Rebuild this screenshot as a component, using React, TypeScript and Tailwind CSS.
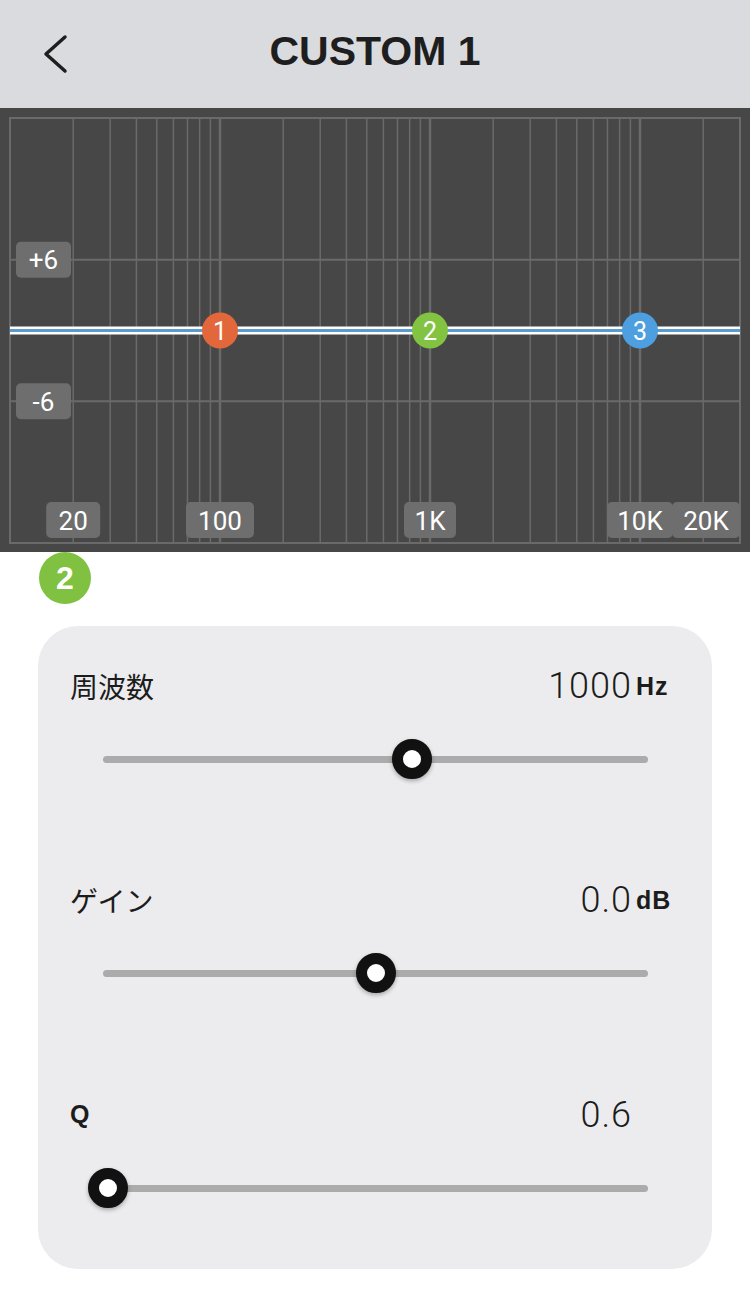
const CHART_W = 750;
const CHART_H = 444;
const LEFT = 10;
const RIGHT = 740;
const TOP = 10;
const BOTTOM = 435;
const PX_PER_DECADE = 210;

// log-frequency axis, 10 Hz at the left edge
const freqX = (f: number) => LEFT + PX_PER_DECADE * Math.log10(f / 10);

// ±18 dB across the plot height
const MID = (TOP + BOTTOM) / 2;
const dbY = (db: number) => MID - (db * (BOTTOM - TOP)) / 36;

const gridFreqs: { f: number; major: boolean }[] = [];
[10, 100, 1000, 10000].forEach((decade) => {
  for (let m = 1; m <= 9; m++) {
    const f = decade * m;
    if (f > 10 && f < 30000) gridFreqs.push({ f, major: m === 1 });
  }
});

const bands = [
  { id: 1, f: 100, color: "#e2673a" },
  { id: 2, f: 1000, color: "#82c341" },
  { id: 3, f: 10000, color: "#4d9fe0" },
];

const freqLabels = [
  { text: "20", x: freqX(20), w: 54 },
  { text: "100", x: freqX(100), w: 68 },
  { text: "1K", x: freqX(1000), w: 52 },
  { text: "10K", x: freqX(10000), w: 66 },
  { text: "20K", x: 706, w: 68 },
];

const LabelBox = ({ text, cx, cy, w }: { text: string; cx: number; cy: number; w: number }) => (
  <g>
    <rect x={cx - w / 2} y={cy - 18} width={w} height={36} rx={5} fill="#6e6e6e" />
    <text
      x={cx}
      y={cy + 9.5}
      textAnchor="middle"
      fill="#ffffff"
      fontSize={26}
      fontFamily="Roboto, 'Liberation Sans', sans-serif"
    >
      {text}
    </text>
  </g>
);

const EqChart = () => (
  <svg width={CHART_W} height={CHART_H} viewBox={`0 0 ${CHART_W} ${CHART_H}`} className="block">
    <rect x={0} y={0} width={CHART_W} height={CHART_H} fill="#474747" />
    <g stroke="#6a6a6a">
      {gridFreqs.map(({ f, major }) => (
        <line key={f} x1={freqX(f)} x2={freqX(f)} y1={TOP} y2={BOTTOM} strokeWidth={major ? 2.5 : 1.5} />
      ))}
      {[6, -6].map((db) => (
        <line key={db} x1={LEFT} x2={RIGHT} y1={dbY(db)} y2={dbY(db)} strokeWidth={2} />
      ))}
      <rect x={LEFT} y={TOP} width={RIGHT - LEFT} height={BOTTOM - TOP} fill="none" strokeWidth={2} />
    </g>

    <LabelBox text="+6" cx={43.5} cy={dbY(6)} w={55} />
    <LabelBox text="-6" cx={43.5} cy={dbY(-6)} w={55} />

    {freqLabels.map((l) => (
      <LabelBox key={l.text} text={l.text} cx={l.x} cy={412} w={l.w} />
    ))}

    {/* response curve */}
    <line x1={LEFT} x2={RIGHT} y1={MID} y2={MID} stroke="#ffffff" strokeWidth={8} />
    <line x1={LEFT} x2={RIGHT} y1={MID} y2={MID} stroke="#5a9bd0" strokeWidth={3} />

    {bands.map((b) => (
      <g key={b.id}>
        <circle cx={freqX(b.f)} cy={MID} r={18} fill={b.color} />
        <text
          x={freqX(b.f)}
          y={MID + 9}
          textAnchor="middle"
          fill="#ffffff"
          fontSize={25}
          fontFamily="Roboto, 'Liberation Sans', sans-serif"
        >
          {b.id}
        </text>
      </g>
    ))}
  </svg>
);

type ParamProps = {
  label: string;
  value: string;
  unit?: string;
  pct: number;
  boldLabel?: boolean;
  className?: string;
};

const ParamSlider = ({ label, value, unit, pct, boldLabel, className }: ParamProps) => (
  <div className={className}>
    <div className="flex h-[40px] items-center justify-between pl-[32px] pr-[40px]">
      <span
        className={
          boldLabel
            ? "font-['Liberation_Sans',sans-serif] text-[25px] font-bold text-[#1c1c1c]"
            : "font-['Noto_Sans_CJK_JP',sans-serif] text-[28px] text-[#1c1c1c]"
        }
      >
        {label}
      </span>
      <div className="flex items-baseline">
        <span className="font-['Roboto',sans-serif] text-[36px] font-light leading-none tracking-[1px] text-[#1c1c1c]">
          {value}
        </span>
        <span className="relative bottom-[3px] w-[40px] pl-[4px] font-['Liberation_Sans',sans-serif] text-[25px] font-bold leading-none tracking-[1px] text-[#1c1c1c]">
          {unit}
        </span>
      </div>
    </div>
    <div className="mt-[33px] flex h-[40px] items-center pl-[65px] pr-[64px]">
      <div className="relative h-[7px] w-full rounded-full bg-[#ababab]">
        <div
          className="absolute top-1/2 h-[40px] w-[40px] -translate-x-1/2 -translate-y-1/2 rounded-full border-[11px] border-[#111111] bg-white shadow-[0_2px_4px_rgba(0,0,0,0.3)]"
          style={{ left: `${pct}%` }}
        />
      </div>
    </div>
  </div>
);

export default function App() {
  const freqPct = (Math.log10(1000 / 20) / 3) * 100;

  return (
    <div className="min-h-[1290px] w-[750px] bg-white">
      <header className="grid h-[108px] grid-cols-[1fr_auto_1fr] items-center bg-[#dadbde]">
        <div className="pl-[42px]">
          <svg width="28" height="40" viewBox="0 0 28 40" fill="none">
            <polyline
              points="23,3 4,20 23,37"
              stroke="#1e1e1e"
              strokeWidth="3.5"
              strokeLinecap="round"
              strokeLinejoin="round"
            />
          </svg>
        </div>
        <h1 className="pb-[4px] font-['Liberation_Sans',sans-serif] text-[41px] font-bold text-[#1e1e1e]">
          CUSTOM 1
        </h1>
        <div />
      </header>

      <EqChart />

      <div className="ml-[39px] flex h-[52px] w-[52px] items-center justify-center rounded-full bg-[#80c141] font-['Liberation_Sans',sans-serif] text-[32px] font-bold text-white">
        2
      </div>

      <section className="mx-[38px] mt-[22px] rounded-[40px] bg-[#ececee] pb-[61px] pt-[40px]">
        <ParamSlider label="周波数" value="1000" unit="Hz" pct={freqPct} />
        <ParamSlider label="ゲイン" value="0.0" unit="dB" pct={50} className="mt-[101px]" />
        <ParamSlider label="Q" value="0.6" pct={0.9} boldLabel className="mt-[102px]" />
      </section>
    </div>
  );
}
